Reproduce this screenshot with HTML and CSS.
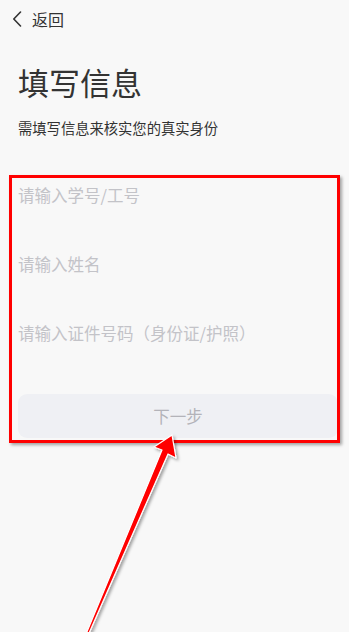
FILE: index.html
```html
<!DOCTYPE html>
<html lang="zh">
<head>
<meta charset="utf-8">
<link rel="stylesheet" href="styles.css">
</head>
<body>
<div class="page">
  <header class="nav">
    <svg class="back-icon" width="10" height="16" viewBox="0 0 10 16"><path d="M8.5 1 L1.8 8 L8.5 15" fill="none" stroke="#333" stroke-width="1.6" stroke-linecap="round" stroke-linejoin="round"/></svg>
    <span class="back-text">返回</span>
  </header>
  <h1 class="title">填写信息</h1>
  <p class="subtitle">需填写信息来核实您的真实身份</p>
  <form class="form">
    <div class="field">请输入学号/工号</div>
    <div class="field">请输入姓名</div>
    <div class="field">请输入证件号码（身份证/护照）</div>
    <div class="btn">下一步</div>
  </form>
  <div class="highlight"></div>
  <svg class="arrow" width="349" height="632" viewBox="0 0 349 632">
    <defs>
      <filter id="sh" x="-20%" y="-20%" width="140%" height="140%">
        <feDropShadow dx="2" dy="2" stdDeviation="1.5" flood-color="#000" flood-opacity="0.35"/>
      </filter>
    </defs>
    <g filter="url(#sh)">
      <path d="M172 435 L176 458 L168 454 L86 640 L84 639 L162 450 L154 447 Z" fill="#f00" stroke="#fff" stroke-width="1.2" stroke-linejoin="round"/>
    </g>
  </svg>
</div>
</body>
</html>
```
FILE: styles.css
```css
html, body {
  margin: 0;
  padding: 0;
  background: #f8f8f8;
}
body {
  font-family: "Noto Sans CJK SC", "Noto Sans", sans-serif;
  color: #333;
}
.page {
  position: relative;
  width: 349px;
  height: 632px;
  overflow: hidden;
}
.nav {
  display: flex;
  align-items: center;
  height: 38px;
  padding-left: 12px;
  gap: 10px;
}
.back-icon {
  display: block;
}
.back-text {
  font-size: 16px;
  color: #333;
}
.title {
  margin: 23px 0 0 18px;
  font-size: 31px;
  font-weight: 400;
  line-height: 42px;
  color: #333;
}
.subtitle {
  margin: 15px 0 0 18px;
  font-size: 14.3px;
  line-height: 20px;
  color: #333;
}
.form {
  margin: 46px 0 0 0;
  padding: 0 11px 0 18px;
}
.field {
  font-size: 16.5px;
  line-height: 22px;
  color: #c3c3c8;
  height: 69px;
}
.btn {
  margin-top: 3px;
  height: 44px;
  border-radius: 9px;
  background: #eff0f4;
  color: #b3b3b9;
  font-size: 16.5px;
  display: flex;
  align-items: center;
  justify-content: center;
}
.highlight {
  position: absolute;
  left: 9px;
  top: 175px;
  width: 325px;
  height: 262px;
  border: 3px solid #ff0000;
  box-shadow: 2px 2px 3px rgba(0,0,0,0.35);
}
.arrow {
  position: absolute;
  left: 0;
  top: 0;
}
```
